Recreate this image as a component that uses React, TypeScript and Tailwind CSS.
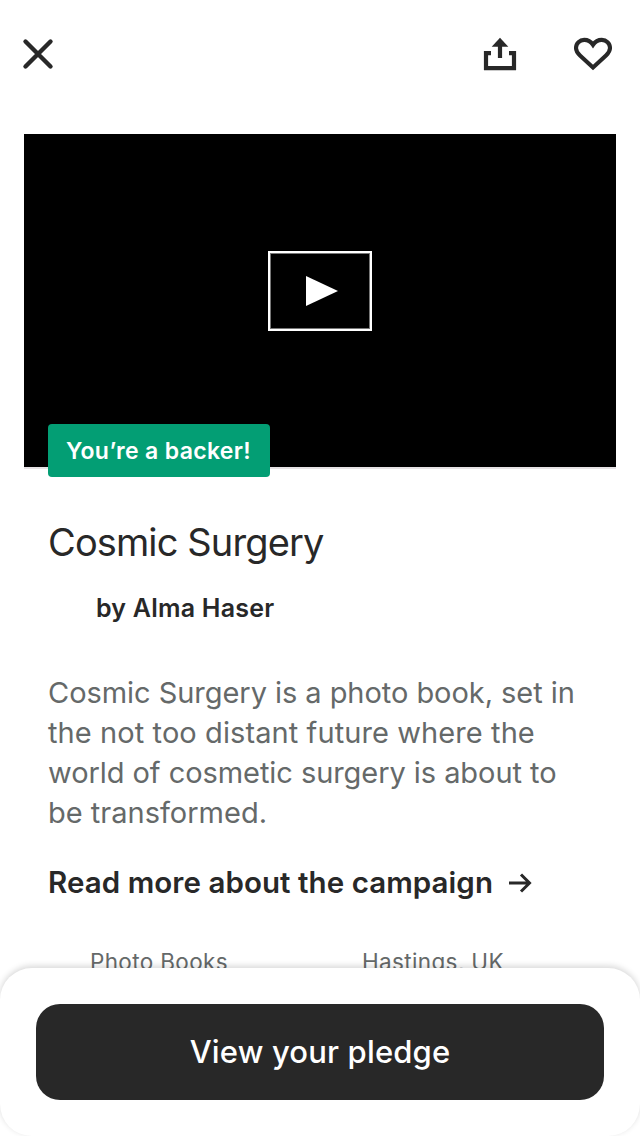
export default function App() {
  return (
    <div className="relative flex h-[1136px] w-[640px] flex-col overflow-hidden bg-white font-['Inter',sans-serif] text-[#282828]">
      <header className="flex h-[134px] shrink-0 items-start justify-between pt-[34px] pr-[26px] pl-[20px]">
        <button aria-label="Close">
          <svg width="36" height="40" viewBox="0 0 36 40" fill="none" stroke="currentColor" strokeWidth="4.4" strokeLinecap="round"><path d="M5.500 7.500 30.500 32.500M30.500 7.500 5.500 32.500" /></svg>
        </button>
        <div className="flex gap-[52px]">
          <button aria-label="Share">
            <svg width="40" height="40" viewBox="0 0 40 40" fill="none" stroke="currentColor" strokeWidth="4.2"><path d="M11 19.200H6V34.200H34V19.200H29M20 24V10" /><path d="M20 3.700 28.300 12.700H11.700Z" fill="currentColor" stroke="none" /></svg>
          </button>
          <button aria-label="Save">
            <svg width="42" height="40" viewBox="0 0 42 40" fill="none" stroke="currentColor" strokeWidth="4.1"><path d="M21 33.500 8 21.500C5.200 18.800 4 16.700 4 14 4 9.200 7.700 5.900 12.200 5.900 16 5.900 19 7.800 21 10.800 23 7.800 26 5.900 29.800 5.900 34.300 5.900 38 9.200 38 14 38 16.700 36.800 18.800 34 21.500Z" /></svg>
          </button>
        </div>
      </header>
      <section className="relative mx-6 flex h-[335px] shrink-0 items-start justify-center border-b-2 border-[#e6e2e5] bg-black pt-[117px]">
        <button aria-label="Play" className="flex h-20 w-[104px] items-center justify-center border-2 border-white shadow-[inset_0_0_0_1px_#777777]">
          <svg className="ml-[3px]" width="32" height="32" viewBox="0 0 32 32" fill="white"><path d="M0 1 32 16 0 31Z" /></svg>
        </button>
        <div className="absolute top-[290px] left-6 flex h-[53px] w-[222px] items-center justify-center rounded-[4px] bg-[#039e74] pt-px pr-px text-[23px] font-semibold tracking-[0.33px] whitespace-nowrap text-white">You’re a backer!</div>
      </section>
      <main className="flex flex-col px-12 pt-[48px] whitespace-nowrap">
        <h1 className="text-[38px] leading-[50px] tracking-[-0.88px]">Cosmic Surgery</h1>
        <p className="mt-[25px] pl-12 text-[25px] leading-[32px] font-semibold tracking-[0.22px]">by Alma Haser</p>
        <p className="mt-[49px] flex flex-col text-[29px] leading-[40px] text-[#656969]">
          <span className="tracking-[-0.05px]">Cosmic Surgery is a photo book, set in</span>
          <span className="tracking-[0.09px]">the not too distant future where the</span>
          <span className="tracking-[-0.06px]">world of cosmetic surgery is about to</span>
          <span>be transformed.</span>
        </p>
        <a className="mt-[29px] flex items-center gap-[16px] text-[29.5px] leading-[40px] font-semibold tracking-[0.06px]">Read more about the campaign
          <svg className="mt-px" width="24" height="20" viewBox="0 0 24 20" fill="none" stroke="currentColor" strokeWidth="3"><path d="M0 10H21M12 1.500 20.500 10 12 18.500" /></svg>
        </a>
        <div className="mt-[44px] flex pl-[42px] text-[22.5px] leading-[32px] tracking-[0.35px] text-[#656969]"><span className="w-[272px]">Photo Books</span><span>Hastings, UK</span></div>
      </main>
      <footer className="absolute inset-x-0 bottom-0 h-[168px] rounded-[32px] bg-white px-9 pt-9 shadow-[0_-2px_6px_rgba(0,0,0,0.16)]">
        <button className="flex h-24 w-full items-center justify-center rounded-[24px] bg-[#282828] text-[31px] font-[550] tracking-[0.16px] text-white">View your pledge</button>
      </footer>
    </div>
  );
}
